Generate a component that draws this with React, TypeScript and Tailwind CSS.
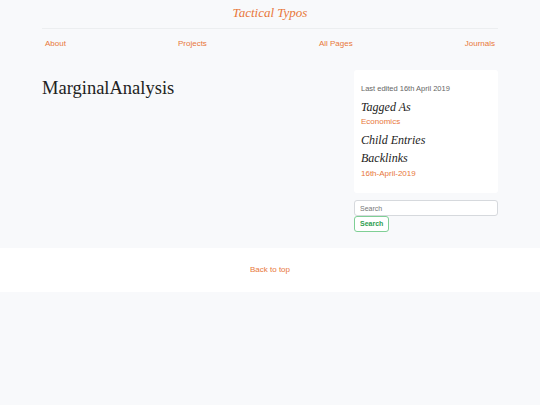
import React from "react";

const serif = "font-['Liberation_Serif','Times_New_Roman',serif]";

const App = () => {
  return (
    <div className="min-h-[405px] bg-[#f8f9fb] font-['Liberation_Sans',Arial,sans-serif]">
      <div className="mx-[42px] w-[456px]">
        {/* Header */}
        <div className={`${serif} border-b border-[#eceef0] pt-[4px] pb-[7px] text-center text-[13px] leading-[17px]`}>
          <a className="italic text-[#e8773a]">Tactical Typos</a>
        </div>
        <nav className="flex justify-between px-[3px] pt-[9px] text-[8px] leading-[12px] text-[#e8773a]">
          <a>About</a>
          <a>Projects</a>
          <a>All Pages</a>
          <a>Journals</a>
        </nav>

        {/* Main */}
        <div className="mt-[20px] flex justify-between">
          <h1 className={`${serif} pt-[7px] text-[18.5px] leading-[22px] text-[#222]`}>MarginalAnalysis</h1>
          <aside className="w-[144px]">
            <div className="rounded-[3px] bg-white px-[7px] pt-[13px] pb-[13px]">
              <p className="text-[7.5px] leading-[11px] text-[#666]">Last edited 16th April 2019</p>
              <h3 className={`${serif} mt-[6px] text-[12px] italic leading-[15px] text-[#222]`}>Tagged As</h3>
              <a className="mt-[1px] block text-[8px] leading-[12px] text-[#e8773a]">Economics</a>
              <h3 className={`${serif} mt-[5px] text-[12px] italic leading-[15px] text-[#222]`}>Child Entries</h3>
              <h3 className={`${serif} mt-[3px] text-[12px] italic leading-[15px] text-[#222]`}>Backlinks</h3>
              <a className="mt-[2px] block text-[8px] leading-[12px] text-[#e8773a]">16th-April-2019</a>
            </div>
            <div className="mt-[7px]">
              <input
                placeholder="Search"
                className="block h-[16px] w-full rounded-[3px] border border-[#d6d9dd] bg-white px-[5px] text-[7px] text-[#444] placeholder:text-[#777] outline-none"
              />
              <button className="block h-[16px] rounded-[3px] border border-[#7fcf95] bg-white px-[5px] text-[7px] font-bold text-[#2e9e4f]">
                Search
              </button>
            </div>
          </aside>
        </div>
      </div>

      {/* Footer */}
      <footer className="mt-[16px] flex h-[44px] items-center justify-center bg-white">
        <a className="text-[8px] text-[#e8773a]">Back to top</a>
      </footer>
    </div>
  );
};

export default App;
